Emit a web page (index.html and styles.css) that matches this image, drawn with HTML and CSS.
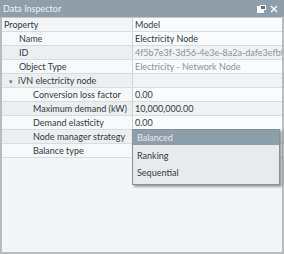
FILE: index.html
```html
<!DOCTYPE html>
<html lang="en">
<head>
    <meta charset="UTF-8">
    <title>Data Inspector</title>
    <link rel="stylesheet" href="styles.css">
</head>
<body>

<div class="panel">
    <div class="titlebar">
        <span class="title">Data Inspector</span>
        <span class="title-icons">
            <svg class="icon-float" width="9" height="8" viewBox="0 0 9 8">
                <rect x="0.5" y="1.5" width="6" height="6" fill="#ffffff" stroke="#ffffff"/>
                <rect x="3" y="0" width="6" height="5" fill="#5f6f79"/>
                <rect x="3.5" y="0.5" width="5" height="4" fill="none" stroke="#ffffff"/>
            </svg>
            <svg class="icon-close" width="8" height="8" viewBox="0 0 8 8">
                <path d="M1 1 L7 7 M7 1 L1 7" stroke="#ffffff" stroke-width="1.3"/>
            </svg>
        </span>
    </div>

    <div class="grid">
        <div class="row head">
            <div class="cell name">Property</div>
            <div class="cell value">Model</div>
        </div>
        <div class="row">
            <div class="cell name lvl1">Name</div>
            <div class="cell value">Electricity Node</div>
        </div>
        <div class="row alt">
            <div class="cell name lvl1">ID</div>
            <div class="cell value readonly">4f5b7e3f-3d56-4e3e-8a2a-dafe3efbf5c</div>
        </div>
        <div class="row">
            <div class="cell name lvl1">Object Type</div>
            <div class="cell value readonly">Electricity - Network Node</div>
        </div>
        <div class="row alt">
            <div class="cell name group"><span class="caret">&#9662;</span>iVN electricity node</div>
            <div class="cell value"></div>
        </div>
        <div class="row">
            <div class="cell name lvl2">Conversion loss factor</div>
            <div class="cell value">0.00</div>
        </div>
        <div class="row alt">
            <div class="cell name lvl2">Maximum demand (kW)</div>
            <div class="cell value">10,000,000.00</div>
        </div>
        <div class="row">
            <div class="cell name lvl2">Demand elasticity</div>
            <div class="cell value">0.00</div>
        </div>
        <div class="row alt">
            <div class="cell name lvl2">Node manager strategy</div>
            <div class="cell value"></div>
        </div>
        <div class="row">
            <div class="cell name lvl2">Balance type</div>
            <div class="cell value"></div>
        </div>

        <div class="dropdown">
            <div class="option selected">Balanced</div>
            <div class="option">Ranking</div>
            <div class="option">Sequential</div>
        </div>
    </div>
</div>

</body>
</html>
```

FILE: styles.css
```css
body {
    margin: 0;
    padding: 0;
    font-family: 'Lato', 'Open Sans', sans-serif;
    font-size: 9px;
    color: #2f3a42;
    background: #ffffff;
}
.panel {
    width: 284px;
    height: 254px;
    box-sizing: border-box;
    border: 2px solid #b9bcbf;
    border-top: none;
    background: #f4f5f7;
    display: flex;
    flex-direction: column;
}
.titlebar {
    height: 17px;
    flex: none;
    margin: 0 -2px;
    padding: 0 6px 0 3px;
    background: #8d9fab;
    color: #eef2f4;
    display: flex;
    align-items: center;
    justify-content: space-between;
}
.title {
    font-size: 9px;
}
.title-icons {
    display: flex;
    align-items: center;
    gap: 4px;
}
.grid {
    position: relative;
    border-top: 1px solid #c4c8cb;
}
.row {
    display: flex;
    height: 14px;
    box-sizing: border-box;
    border-bottom: 1px solid #d9dcdf;
    background: #f7f8f9;
}
.row.alt {
    background: #eceef0;
}
.row.head {
    background: #f3f4f6;
}
.cell {
    line-height: 13px;
    white-space: nowrap;
    overflow: hidden;
}
.cell.name {
    width: 131px;
    flex: none;
    box-sizing: border-box;
    padding-left: 2px;
    border-right: 1px solid #cfd2d5;
}
.cell.value {
    flex: 1;
    padding-left: 2px;
    background: #fafbfc;
}
.row.alt .cell.value {
    background: #f1f2f4;
}
.cell.readonly {
    color: #8a9298;
}
.lvl1 {
    padding-left: 17px !important;
}
.lvl2 {
    padding-left: 31px !important;
}
.group {
    padding-left: 7px !important;
}
.caret {
    font-size: 7px;
    color: #6b7780;
    margin-right: 5px;
}
.dropdown {
    position: absolute;
    left: 130px;
    top: 111px;
    width: 148px;
    box-sizing: border-box;
    background: #e9eaec;
    border: 1px solid #8a8f93;
    box-shadow: 2px 2px 2px rgba(0, 0, 0, 0.35);
    padding-bottom: 3px;
}
.option {
    height: 17px;
    line-height: 17px;
    padding-left: 4px;
}
.option.selected {
    height: 15px;
    line-height: 15px;
    background: #8d9fab;
    color: #e4eaee;
    margin-bottom: 2px;
}
```
